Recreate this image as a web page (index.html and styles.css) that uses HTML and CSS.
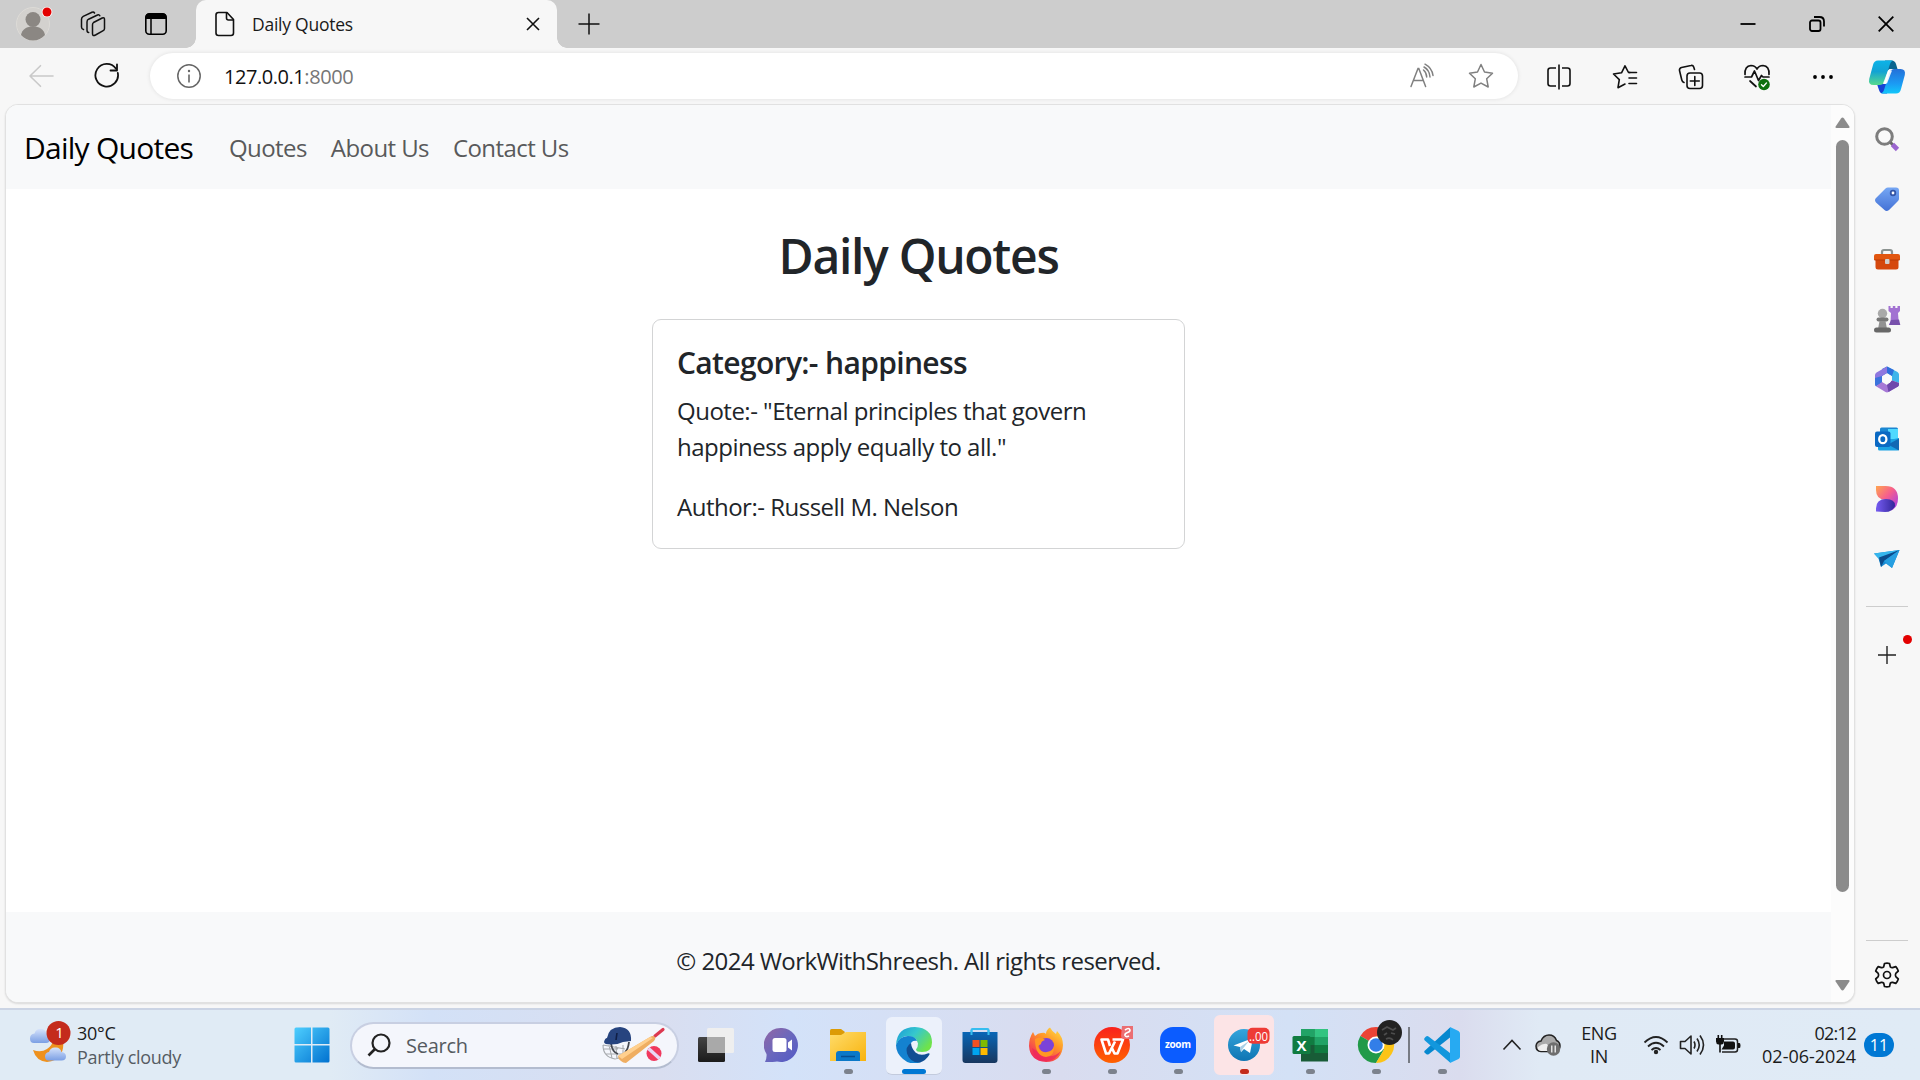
FILE: index.html
```html
<!DOCTYPE html>
<html lang="en">
<head>
<meta charset="utf-8">
<title>Daily Quotes</title>
<link rel="stylesheet" href="styles.css">
</head>
<body>
<div class="screen">
  <header class="tabstrip">
    <div class="strip-btn avatar-btn">
      <svg width="42" height="42" viewBox="0 0 42 42"><circle cx="21" cy="21" r="16.5" fill="#d3d1ce" stroke="#dddbd7"/><circle cx="21" cy="16.5" r="7.5" fill="#8b8783"/><path d="M9 32c1-6 6-8.500 12-8.500s11 2.500 12 8.500c-3 3.500-7 5.500-12 5.500s-9-2-12-5.500z" fill="#8b8783"/><circle cx="35" cy="9" r="5.300" fill="#fff"/><circle cx="35" cy="9" r="4.500" fill="#e30000"/></svg>
    </div>
    <div class="strip-btn workspaces-btn">
      <svg width="26" height="26" viewBox="0 0 26 26" fill="none" stroke="#111" stroke-width="1.500" stroke-linejoin="round" stroke-linecap="round"><path d="M13.500 11.500 22.200 7q2.300-1 2.300 1.500v9q0 1.500-1.300 2.200L15.500 24q-3 1.500-3-1.200v-9q0-1.600 1-2.300z"/><path d="M8.700 21.500Q7 21.500 7 19V11q0-2 1.600-2.800L17.500 4q1.700-.7 2.300.8"/><path d="M3.500 18.500Q1.500 18 1.500 16V8.300q0-2 1.700-2.900L12 1.300q1.700-.6 2.500.7"/></svg>
    </div>
    <div class="strip-btn actions-btn">
      <svg width="24" height="24" viewBox="0 0 24 24"><rect x="1.800" y="1.800" width="20.400" height="20.400" rx="3.500" fill="none" stroke="#000" stroke-width="1.600"/><path d="M1.500 7V5q0-3.500 3.500-3.500h14q3.500 0 3.500 3.500v2z"/><path d="M7 7v15" stroke="#000" stroke-width="1.500"/></svg>
    </div>
    <div class="tab">
      <svg class="tab-file" width="20" height="26" viewBox="0 0 20 26" fill="none" stroke="#111" stroke-width="1.600" stroke-linejoin="round"><path d="M3.500 1.500h8.500l6.500 7v13.500q0 2.500-2.500 2.500h-12.500q-2.500 0-2.500-2.500v-18q0-2.500 2.500-2.500z"/><path d="M11.500 1.500v5.500q0 2 2 2h5"/></svg>
      <span class="tab-title">Daily Quotes</span>
      <svg class="tab-close" width="16" height="16" viewBox="0 0 16 16" stroke="#111" stroke-width="1.600"><path d="M2 2l12 12M14 2 2 14"/></svg>
    </div>
    <div class="new-tab"><svg width="22" height="22" viewBox="0 0 22 22" stroke="#111" stroke-width="1.500"><path d="M11 .5v21M.5 11h21"/></svg></div>
    <div class="window-btns">
      <div class="win-btn"><svg width="16" height="16" viewBox="0 0 16 16" stroke="#000" stroke-width="1.800"><path d="M.5 8h15"/></svg></div>
      <div class="win-btn"><svg width="16" height="16" viewBox="0 0 16 16" fill="none" stroke="#000" stroke-width="1.800"><rect x="1" y="4.500" width="10.500" height="10.500" rx="2"/><path d="M5 1h5.500q4.500 0 4.500 4.500V10.500"/></svg></div>
      <div class="win-btn"><svg width="16" height="16" viewBox="0 0 16 16" stroke="#000" stroke-width="1.800"><path d="M.7.7l14.600 14.600M15.300.7.7 15.300"/></svg></div>
    </div>
  </header>

  <div class="toolbar">
    <div class="tool-left"><svg width="26" height="24" viewBox="0 0 26 24" fill="none" stroke="#c9c9c9" stroke-width="1.600" stroke-linecap="round" stroke-linejoin="round"><path d="M25 12H2M12.500 1.700 2 12l10.500 10.300"/></svg></div>
    <div class="tool-left"><svg width="26" height="26" viewBox="0 0 26 26" fill="none" stroke="#111" stroke-width="1.800" stroke-linecap="round" stroke-linejoin="round"><path d="M23.800 10A11.300 11.300 0 1 1 22 5.800"/><path d="M23 1.500v6h-6.500"/></svg></div>
    <div class="address">
      <svg class="info" width="26" height="26" viewBox="0 0 26 26"><circle cx="13" cy="13" r="11.200" fill="none" stroke="#666" stroke-width="1.500"/><path d="M13 11.500v8" stroke="#666" stroke-width="1.600"/><circle cx="13" cy="8" r="1.200" fill="#666"/></svg>
      <span class="url"><span class="host">127.0.0.1</span><span class="port">:8000</span></span>
      <svg class="read" width="26" height="26" viewBox="0 0 26 26" fill="none" stroke="#808080" stroke-width="1.500" stroke-linecap="round"><path d="M2 23.500 9 5.500h.8l6.800 18M4.500 17.500h9.700"/><path d="M14.500 7q3 2.500 3.200 7M15 4q5.500 3 6 10M16 1.200q7 3.800 8 11.300"/></svg>
      <svg class="star" width="26" height="26" viewBox="0 0 26 26" fill="none" stroke="#808080" stroke-width="1.500" stroke-linejoin="round"><path d="M13 1.500 16.500 9l8 1.200-5.800 5.600 1.500 8.200L13 20.100 5.800 24l1.500-8.200L1.500 10.200l8-1.200z"/></svg>
    </div>
    <div class="tools">
      <div class="tool"><svg width="26" height="26" viewBox="0 0 26 26" fill="none" stroke="#111" stroke-width="1.600" stroke-linejoin="round"><path d="M13 .5v25M10 4H4.500Q2 4 2 6.500v13Q2 22 4.500 22H10M16 4h5.500q2.500 0 2.500 2.500v13q0 2.500-2.500 2.500H16"/></svg></div>
      <div class="tool"><svg width="26" height="26" viewBox="0 0 26 26" fill="none" stroke="#111" stroke-width="1.600" stroke-linejoin="round" stroke-linecap="round"><path d="M18 8.500h-1.500L13 1.800 9.500 8.800 1.500 10l5.800 5.600L6 23.700l7-3.700"/><path d="M17 8.500h7.500M17 14h7.500M17 19.500h7.500"/></svg></div>
      <div class="tool"><svg width="26" height="26" viewBox="0 0 26 26" fill="none" stroke="#111" stroke-width="1.600" stroke-linejoin="round" stroke-linecap="round"><rect x="9" y="9" width="15.500" height="15.500" rx="3"/><path d="M16.800 12.500v9M12.300 17h9M16.500 5.500l-.8-2.500Q15 1 13 1.500L3.500 3.500q-2.300.7-2 3l2.300 9.500q.5 2 2.200 2.500"/></svg></div>
      <div class="tool"><svg width="28" height="28" viewBox="0 0 28 28" fill="none" stroke="#111" stroke-width="1.700" stroke-linejoin="round" stroke-linecap="round"><path d="M2 11.500Q1.500 3 8 2.500q4 0 6 3.500 2-3.500 6-3.500 6.500.5 6 9M2 14h6.500l3-6 4 9.500 3-5 1.500 1.500h6M7 18l6 5.500"/><circle cx="21" cy="21.500" r="5.800" fill="#0e700e" stroke="none"/><path d="m18.500 21.800 1.800 1.700 3.200-3.600" stroke="#fff" stroke-width="1.400"/></svg></div>
      <div class="tool"><svg width="22" height="6" viewBox="0 0 22 6"><circle cx="3" cy="3" r="1.900"/><circle cx="11" cy="3" r="1.900"/><circle cx="19" cy="3" r="1.900"/></svg></div>
    </div>
    <div class="copilot"><svg width="38" height="36" viewBox="0 0 38 36"><defs><linearGradient id="cp1" x1="0" y1="0" x2="0" y2="1"><stop offset="0" stop-color="#0cb3e8"/><stop offset=".45" stop-color="#12a3d4"/><stop offset="1" stop-color="#57da8d"/></linearGradient><linearGradient id="cp2" x1="0" y1="0" x2="0" y2="1"><stop offset="0" stop-color="#2470d8"/><stop offset=".6" stop-color="#1b9bf4"/><stop offset="1" stop-color="#12c7fa"/></linearGradient></defs><path d="M17 1.500h6.500q3.500 0 4.500 3.500l1.500 5h-8l-5 4z" fill="#09648f"/><path d="M9 25h13l-3 9.500h-4q-3 0-4-3.500z" fill="#1543d5"/><path d="M10 1.500h15q-2.500 1-3.500 5l-4.500 15q-1 4-5 4.500H5.500Q0 26 1.200 20L5 6q1-4.500 5-4.500z" fill="url(#cp1)"/><path d="M28 34.500H13q2.500-1 3.500-5l4.500-15q1-4 5-4.500h6.500Q38 10 36.800 16L33 30q-1 4.500-5 4.500z" fill="url(#cp2)"/><path d="M20 11.500h4l-5 13h-4z" fill="#fff" opacity=".9"/></svg></div>
  </div>

  <div class="workspace">
    <div class="viewport">
      <div class="page">
        <nav class="navbar">
          <span class="brand">Daily Quotes</span>
          <span class="nav-link">Quotes</span>
          <span class="nav-link">About Us</span>
          <span class="nav-link">Contact Us</span>
        </nav>
        <main class="content">
          <h1 class="heading">Daily Quotes</h1>
          <div class="card">
            <h2 class="card-title">Category:- happiness</h2>
            <p class="quote">Quote:- "Eternal principles that govern<br>happiness apply equally to all."</p>
            <p class="author">Author:- Russell M. Nelson</p>
          </div>
        </main>
        <footer class="footer">© 2024 WorkWithShreesh. All rights reserved.</footer>
      </div>
      <div class="scrollbar">
        <svg width="15" height="12" viewBox="0 0 15 12"><path d="M1.500 11Q0 11 .6 9.500L6 1.500q1.500-2 3 0l5.400 8Q15 11 13.500 11z" fill="#8b8b8b"/></svg>
        <div class="thumb"></div>
        <svg class="down" width="15" height="12" viewBox="0 0 15 12"><path d="M1.500 1Q0 1 .6 2.500L6 10.500q1.500 2 3 0l5.400-8Q15 1 13.500 1z" fill="#8b8b8b"/></svg>
      </div>
    </div>

    <aside class="sidebar">
      <div class="side-item"><svg width="28" height="28" viewBox="0 0 28 28"><circle cx="11.500" cy="11.500" r="7.800" fill="#fafafa" stroke="#7d7d7d" stroke-width="3"/><path d="m17.500 17.500 3 3" stroke="#686868" stroke-width="3"/><path d="m19.500 19.500 5 5" stroke="#9b65cf" stroke-width="4.600"/></svg></div>
      <div class="side-item"><svg width="26" height="26" viewBox="0 0 26 26"><defs><linearGradient id="tg" x2="0" y2="1"><stop stop-color="#76a7f4"/><stop offset="1" stop-color="#4472d6"/></linearGradient></defs><path d="M14 1.500h8q3 0 3 3v8q0 1.500-1 2.500l-9 9q-2.500 2-4.500 0L2 16.500q-2-2.500 0-4.500L11.500 2.500q1-1 2.500-1z" fill="url(#tg)"/><circle cx="19" cy="7" r="2.300" fill="#fff" stroke="#3355a8" stroke-width="1.800"/></svg></div>
      <div class="side-item"><svg width="28" height="24" viewBox="0 0 28 24"><path d="M9 8V5q0-2 2-2h6q2 0 2 2v3" fill="none" stroke="#8b9290" stroke-width="2.200"/><path d="M2.500 11h23v9q0 2.500-2.500 2.500H5Q2.500 22.500 2.500 20z" fill="#d5480d"/><path d="M3 7h22q2 0 2 2v4H1V9q0-2 2-2z" fill="#e2560f"/><path d="M1.500 13h25" stroke="#b83a08" stroke-width="1"/><rect x="12" y="12" width="4.500" height="5" rx="1" fill="#cfd0d0"/></svg></div>
      <div class="side-item"><svg width="28" height="28" viewBox="0 0 28 28"><path d="M15.500 1h2v2h2.300V1h2.500v2h2.200V1h2.500v5l-2 2 .7 9 1.300 3H16l1.500-3 .5-9-2.500-2z" fill="#a271d2"/><path d="m18 15 8-.5 1.300 5.500H16z" fill="#7851ac"/><circle cx="9.500" cy="8.500" r="4.700" fill="#a9a9a9"/><rect x="3.500" y="12.500" width="12" height="4" rx="2" fill="#777"/><path d="M6.500 16h6l1.500 8H5z" fill="#929292"/><rect x="1" y="22.500" width="17" height="5" rx="2.500" fill="#686868"/></svg></div>
      <div class="side-item"><svg width="26" height="28" viewBox="0 0 26 28"><path d="M13 1.500 23.500 7Q25 8 25 9.500V18l-7-2.500V11L11 6.500z" fill="#3fb4ea"/><path d="M13 1.500 20 5l-2 6-5-3-5 3V4z" fill="#2f6fdc"/><path d="M13 1.500 2.500 7.500Q1 8.500 1 10v9q0 1.500 1 2.300l6-4.300v-6l5-3z" fill="#8f78df"/><path d="M8 11v7l-6 3.300Q1 20.500 1 19v-6z" fill="#3b73dc"/><path d="M2 21.300 11.500 27q1.500.8 3 0l9.500-5.500q1-.7 1-2V18l-7-2.500-5 4.500-5-3z" fill="#a678d6"/><path d="M25 18v1.500q0 1.300-1 2L14.500 27l-1.500-7 5-4.500z" fill="#6f48ac"/><circle cx="13" cy="14" r="4.600" fill="#fafafa"/></svg></div>
      <div class="side-item"><svg width="26" height="26" viewBox="0 0 26 26"><rect x="6" y="1.500" width="18" height="14" rx="1.500" fill="#1b86d2"/><path d="M14 3h10v10l-4 3-6-2z" fill="#50d9ff"/><path d="M4 13h16l5-1v11q0 1.500-1.500 1.500H5.500Q4 24.500 4 23z" fill="#1ba2e3"/><path d="m25 12.500-11 6 11 6z" fill="#1269b4"/><rect x="1" y="5.500" width="15.500" height="15.500" rx="2" fill="#0a69c3"/><ellipse cx="8.800" cy="13.200" rx="3.600" ry="4" fill="none" stroke="#fff" stroke-width="2.300"/></svg></div>
      <div class="side-item"><svg width="24" height="28" viewBox="0 0 24 28"><defs><linearGradient id="ds" x2="1" y2="1"><stop stop-color="#ffa650"/><stop offset=".45" stop-color="#f65f8c"/><stop offset="1" stop-color="#9a38f5"/></linearGradient><linearGradient id="ds2" x2="1"><stop stop-color="#765cf2"/><stop offset="1" stop-color="#33269a"/></linearGradient></defs><path d="M1 1h9.500Q23 1 23 13.500q0 9-7 12L10 15Q1 14 1 5z" fill="url(#ds)"/><path d="M1 26.500v-3Q1 14 11 14q9 0 9 6.500 0 2-4 5-2 1.500-6 1.500z" fill="url(#ds2)"/></svg></div>
      <div class="side-item"><svg width="28" height="22" viewBox="0 0 28 22"><path d="M1 5.500 26.500 2 19 20l-6-4.500-5 3.500-2.500-8.500z" fill="#178bd4"/><path d="M1 5.500 26.500 2 6 11z" fill="#35b6ed"/><path d="M26.500 2 6 9.500 8 19l3-6z" fill="#0b4c8c"/><path d="M26.500 2 11 13l8 7z" fill="#269fe1"/></svg></div>
      <div class="side-rule"></div>
      <div class="side-add"><svg width="20" height="20" viewBox="0 0 20 20" stroke="#222" stroke-width="1.400"><path d="M10 1v18M1 10h18"/></svg><i class="dot"></i></div>
      <div class="side-bottom">
        <div class="side-rule"></div>
        <svg width="28" height="28" viewBox="0 0 28 28" fill="none" stroke="#111" stroke-width="1.700" stroke-linejoin="round"><path d="M11.500 2.500q2.500-.7 5 0l.8 3.300q1 1 2.300.8l3.200-1q1.800 2 2.500 4.400l-2.500 2.300q-.8 1.700 0 3.400l2.500 2.300q-.7 2.400-2.500 4.400l-3.200-1q-1.300-.2-2.300.8l-.8 3.300q-2.500.7-5 0l-.8-3.300q-1-1-2.300-.8l-3.200 1Q3.400 20.400 2.700 18l2.500-2.300q.8-1.700 0-3.400L2.700 10Q3.400 7.600 5.200 5.600l3.200 1q1.300.2 2.300-.8z"/><circle cx="14" cy="14" r="3.500"/></svg>
      </div>
    </aside>
  </div>

  <div class="taskbar">
    <div class="weather">
      <svg width="44" height="46" viewBox="0 0 44 46"><defs><linearGradient id="cl" x2="0" y2="1"><stop stop-color="#d5e2fb"/><stop offset="1" stop-color="#7b9fe4"/></linearGradient></defs><path d="M7 22q-4 0-4-4.500t4.500-5Q9 7.500 13.500 8q4.500-.5 6 4.500 3.500.5 3.500 5t-4 4.500z" fill="url(#cl)"/><path d="M6 29q8 3 14-1 6-4 6-10l10 2q1 8-2 13-5 7.500-14 8Q9 40 6 29z" fill="#ee911e"/><path d="M22 39.500q-4 0-4-4t4-4.500q1.500-5 6.500-4.500 4.500-.5 6 4.500 4.500.5 4.500 4.500t-4.500 4z" fill="url(#cl)"/><circle cx="31.500" cy="12" r="12" fill="#c42b1c"/><text class="badge-one" x="32.500" y="17" text-anchor="middle">1</text></svg>
      <div class="weather-text"><span>30°C</span><span class="muted">Partly cloudy</span></div>
    </div>
    <div class="start"><svg width="36" height="36" viewBox="0 0 36 36"><defs><linearGradient id="wn" gradientUnits="userSpaceOnUse" x1="0" y1="0" x2="36" y2="36"><stop stop-color="#4fd0ff"/><stop offset="1" stop-color="#0070cf"/></linearGradient></defs><g fill="url(#wn)"><path d="M2 .5h15v16.500H.5V2Q.5.500 2 .5zM18.500.5H34q1.500 0 1.500 1.500v15h-17zM.5 18.500H17v17H2Q.5 35.500.5 34zM18.500 18.500h17V34q0 1.500-1.500 1.500H18.500z"/></g></svg></div>
    <div class="search">
      <svg width="24" height="24" viewBox="0 0 24 24" fill="none" stroke="#222" stroke-width="2.200"><circle cx="14" cy="10" r="8.500"/><path d="M8 16l-6.500 6.500" stroke-width="2.600"/></svg>
      <span class="search-label">Search</span>
      <svg class="cricket" width="66" height="40" viewBox="0 0 66 40"><g fill="none" stroke="#a7aaae" stroke-width="1.100"><path d="M3 20q0 12 12 14l8-2M4 24h14M6 29h16M9 20l3 13M16 21l1 13M23 20v12M3 20l22 4"/></g><path d="M11 18q1 9 7 11M29 17q-1 8-4 10" fill="none" stroke="#44474f" stroke-width="1.800"/><path d="M4 17Q5 13 7 13 9 2 20 2q12 1 11 14l-8 1q-5 2.500-12 2.500-7 0-7-2.500z" fill="#27447f"/><path d="M17 8l-1 7" stroke="#111f45" stroke-width="1.600"/><path d="m55 11 8-6.500" stroke="#dc3850" stroke-width="3.200" stroke-linecap="round"/><path d="m18 31 32-19q3-2 5 0 1 2-1 4L26 38q-3 0-5-2-3-2-3-5z" fill="#efae62"/><path d="m18 31 32-19 3 1-31 21z" fill="#ffd08f"/><circle cx="54" cy="28.500" r="7.500" fill="#f0395e"/><path d="m48.500 23.500 11 10" stroke="#e9d6f5" stroke-width="3.500"/></svg>
    </div>
    <div class="apps">
      <div class="app"><svg width="36" height="36" viewBox="0 0 36 36"><defs><linearGradient id="tv" x2="0" y2="1"><stop stop-color="#444"/><stop offset="1" stop-color="#1b1b1b"/></linearGradient></defs><rect x="0" y="10" width="27" height="25" rx="1.500" fill="url(#tv)"/><rect x="9" y="1" width="27" height="25" rx="1.500" fill="#efefef"/><path d="M9 10h18v16H9z" fill="#a9a9a9"/></svg></div>
      <div class="app"><svg width="36" height="36" viewBox="0 0 36 36"><defs><linearGradient id="ch" x2="1" y2="1"><stop stop-color="#9366a4"/><stop offset=".5" stop-color="#6a68bd"/><stop offset="1" stop-color="#5158c6"/></linearGradient></defs><path d="M18 1a17 17 0 1 1-5 33.500q-3 .5-12 .5 2-4 1.500-8A17 17 0 0 1 18 1z" fill="url(#ch)"/><rect x="8.500" y="11" width="14" height="14" rx="2.500" fill="#fff"/><path d="m24 15.500 4-3v11l-4-3z" fill="#fff"/></svg></div>
      <div class="app run"><svg width="36" height="36" viewBox="0 0 36 36"><defs><linearGradient id="fo" x2="1" y2="1"><stop stop-color="#ffdc6b"/><stop offset="1" stop-color="#f8b30d"/></linearGradient></defs><path d="M0 3.500Q0 2 1.500 2H11l4 3-3 5H0z" fill="#dc9b06"/><path d="M0 8h11l5-3h20v29H0z" fill="url(#fo)"/><path d="M6 34V27q0-3 3-3h18q3 0 3 3v7z" fill="#0b78c8"/><path d="M11 29.500h14" stroke="#064e92" stroke-width="1.500"/></svg></div>
      <div class="app active"><svg width="36" height="36" viewBox="0 0 36 36"><defs><linearGradient id="e1" x2="1" y2=".6"><stop stop-color="#1998d8"/><stop offset=".5" stop-color="#36c8cd"/><stop offset="1" stop-color="#6fe34a"/></linearGradient></defs><path d="M0 18Q1 0 19 0q17 1 17 15.500 0 9.500-10 9.500-6 0-6-2.500 2-2 2-6Q21 9.500 12 9 4 9 0 18z" fill="url(#e1)"/><path d="M0 18Q3 9.500 12 9q7 0 9 5-6-1-7 5-1 10 11 16-10 4-18-3Q0 26 0 18z" fill="#1482d0"/><path d="M15 16q-6 4-4 10.500Q14 36 24 35.500q6-2 9.500-8 .5-2-2-1-7 3-12-1-4-4-4.500-9.500z" fill="#104e93"/></svg></div>
      <div class="app"><svg width="36" height="36" viewBox="0 0 36 36"><defs><linearGradient id="st" x2="0" y2="1"><stop stop-color="#0866b7"/><stop offset="1" stop-color="#18375f"/></linearGradient></defs><path d="M9.500 8V3q0-1 1-1h15q1 0 1 1v5" fill="none" stroke="#36bdf0" stroke-width="2"/><path d="M.5 5H35.500v28q0 3-3 3h-29q-3 0-3-3z" fill="url(#st)"/><path d="M9.500 3v5M26.500 3v5" stroke="#36bdf0" stroke-width="2"/><path d="M10.500 13h7v7h-7z" fill="#f25022"/><path d="M18.500 13h7v7h-7z" fill="#7fba00"/><path d="M10.500 21h7v7h-7z" fill="#00a4ef"/><path d="M18.500 21h7v7h-7z" fill="#ffb900"/></svg></div>
      <div class="app run"><svg width="36" height="36" viewBox="0 0 36 36"><defs><linearGradient id="ff" x1="1" x2=".3" y2="1"><stop stop-color="#ffe84b"/><stop offset=".45" stop-color="#ff9626"/><stop offset="1" stop-color="#f0265f"/></linearGradient></defs><path d="M5 5l2 4q3-3 6-3 4-1 5 1 0-4 4-6.500 2 4 6 6.500l1-3q6 6 6 14Q34 35 18 35 2 34 1 19q0-8 4-14z" fill="url(#ff)"/><path d="M4 21q2 13 14 13 10 0 15-10-8 8-18 4z" fill="#ee255e" opacity=".75"/><circle cx="18.500" cy="18.500" r="7.500" fill="#7b43d8"/><path d="M7 12q6-3 10 1-4 1-4 4l-3 2q2 7 9 6 6-1 7-6 1 10-8 11Q7 29 7 12z" fill="#ff9723"/></svg></div>
      <div class="app run"><svg class="spill" width="36" height="36" viewBox="0 0 36 36"><defs><linearGradient id="wp" x2="0" y2="1"><stop stop-color="#f9221d"/><stop offset="1" stop-color="#ff6200"/></linearGradient></defs><circle cx="18" cy="18" r="18" fill="url(#wp)"/><path d="M16 19 14 12.500H7.500L12 26.500l3 0 6-12 M18.500 12.500H29L23.500 26.500h-3L17.500 20" fill="none" stroke="#fff" stroke-width="2.600" stroke-linejoin="round"/><path d="M28-1h11v13H29q-2-1-2-3z" fill="#eb6e72"/><path d="M31 3q4-3 5 0 0 2-2.500 2.500-3 1-2.500 3 1 2 4 .5" fill="none" stroke="#fff" stroke-width="1.600"/></svg></div>
      <div class="app run"><svg width="36" height="36" viewBox="0 0 36 36"><rect width="36" height="36" rx="13" fill="#0b5cff"/><text class="zoom" x="18" y="21" text-anchor="middle" textLength="26">zoom</text></svg></div>
      <div class="app run alert"><svg class="spill" width="36" height="36" viewBox="0 0 36 36"><defs><linearGradient id="te" x2="0" y2="1"><stop stop-color="#35a5dc"/><stop offset="1" stop-color="#0e75b3"/></linearGradient></defs><circle cx="18" cy="18" r="16" fill="url(#te)"/><path d="M7.500 18.500 27 11l-3 15-6-4-3 3-1-5z" fill="#fff"/><path d="m14 20 9-6-6 7.500-2 3.500z" fill="#a9cfe6"/><rect x="21.500" y=".7" width="22" height="16" rx="5" fill="#ee3b36"/><text class="tg-badge" x="32.500" y="13.500" text-anchor="middle" textLength="19" lengthAdjust="spacingAndGlyphs">..00</text></svg></div>
      <div class="app run"><svg width="36" height="36" viewBox="0 0 36 36"><path d="M9 2h27v32.500H9z" fill="#185c37"/><path d="M9 2h13.500v8H9z" fill="#21a366"/><path d="M22.500 2h13.500v8H22.500z" fill="#33c481"/><path d="M9 10h13.500v8H9zM22.500 18H36v8H22.500z" fill="#107c41"/><path d="M22.500 10H36v8H22.500z" fill="#21a366"/><rect x=".5" y="9" width="18" height="18" rx="1.500" fill="#107c41"/><text class="xl" x="9.500" y="23.500" text-anchor="middle">X</text></svg></div>
      <div class="app run"><svg class="spill" width="36" height="36" viewBox="0 0 36 36"><path d="M18 18 2.400 9A18 18 0 0 1 33.600 9z" fill="#ea4335"/><path d="M18 18 2.400 9A18 18 0 0 0 18 36l8-13.500z" fill="#219a49"/><path d="M18 9h15.600A18 18 0 0 1 18 36l8-13.500z" fill="#fcc417"/><circle cx="18" cy="18" r="8.500" fill="#fff"/><circle cx="18" cy="18" r="6.800" fill="#327ee8"/><circle cx="31.500" cy="5.500" r="12.500" fill="#222"/><path d="m24 3 5-3 6 3 3-2M26 8l3-2M33 6l4 1M28 12q4-2 7 1" fill="none" stroke="#4d4d4d" stroke-width="1.700"/></svg></div>
      <div class="app run vs"><svg width="36" height="36" viewBox="0 0 36 36"><path d="M26 .5 1 23.500q-1.500 1.200 0 2.500L2.500 27.200q1 .8 2.500-.2L26 10.500z" fill="#0688cf"/><path d="M4.500 9.500q-1.200-.8-2.500 0L.8 10.700Q-.5 12 .8 13.500L26 35.500V26z" fill="#1297dd"/><path d="m26 0 8.500 4Q36 5 36 6.500v23q0 1.500-1.500 2.500L26 36z" fill="#27aaf2"/></svg></div>
    </div>
    <div class="tray">
      <svg class="t-chev" width="20" height="12" viewBox="0 0 20 12" fill="none" stroke="#222" stroke-width="1.600"><path d="m1.500 10.500 8.500-9 8.500 9"/></svg>
      <svg class="t-cloud" width="26" height="24" viewBox="0 0 26 24"><path d="M6 18.500q-5-.5-5-5.500Q1.500 8.500 6 8 8.500 2 14 2q5.500 0 7.500 5.500Q25 9 25 13t-4 5.500z" fill="#aaa" stroke="#222" stroke-width="1.500"/><path d="M6 18q-4-.5-3-4 5-4 9-3l4 7z" fill="#eee"/><circle cx="18.500" cy="16" r="6.700" fill="#6e6e6e"/><path d="M16.800 12.500v7M20.200 12.500v7" stroke="#fff" stroke-width="1.200"/></svg>
      <div class="lang"><span>ENG</span><span>IN</span></div>
      <svg class="t-wifi" width="26" height="20" viewBox="0 0 26 20" fill="none" stroke="#222" stroke-width="1.800"><path d="M1.500 7.500q11.500-11 23 0M5 11.500q8-7.500 16 0M8.500 15q4.500-4 9 0"/><circle cx="13" cy="17" r="2.200" fill="#222" stroke="none"/></svg>
      <svg class="t-vol" width="26" height="22" viewBox="0 0 26 22" fill="none" stroke="#222" stroke-width="1.600" stroke-linejoin="round"><path d="M1.500 7.500H6L12 2v18l-6-5.500H1.500z"/><path d="M15 7.500q2 3.500 0 7M18 4.500q4.500 6.500 0 13M21 1.500q7 9.500 0 19"/></svg>
      <svg class="t-bat" width="26" height="22" viewBox="0 0 26 22"><path d="M9 5h11q2.500 0 2.500 2.500v8q0 2.500-2.500 2.500H7" fill="none" stroke="#222" stroke-width="1.500"/><path d="M9 7.500h9q2 0 2 2v4q0 2-2 2H6.500l2.500-4zM23 9h1.500q1 0 1 2.500t-1 2.500H23zM1 4h8v3.500q0 2.500-2.500 3h-3Q1 10 1 7.500z" fill="#111"/><path d="M3.300 1v4M6.700 1v4M5 9v9.500" stroke="#111" stroke-width="1.600"/></svg>
      <div class="clock"><span class="time">02:12</span><span>02-06-2024</span></div>
      <div class="count">11</div>
    </div>
  </div>
</div>
</body>
</html>
```
FILE: styles.css
```css
* { box-sizing: border-box; }
body { margin: 0; font-family: "Open Sans", "Noto Sans", sans-serif; color: #212529; overflow: hidden; }
svg { display: block; flex: none; }
h1, h2, p { margin: 0; }

.screen { width: 1920px; height: 1080px; display: flex; flex-direction: column; background: #f7f7f7; }

/* Browser tab strip */
.tabstrip { height: 48px; display: flex; align-items: center; background: #cdcdcd; }
.strip-btn { display: flex; justify-content: center; }
.avatar-btn { width: 66px; }
.workspaces-btn { width: 54px; }
.actions-btn { width: 76px; padding-right: 4px; }
.tab { position: relative; width: 361px; height: 48px; display: flex; align-items: center; padding: 0 16px 0 19px; background: #f7f7f7; border-radius: 10px 10px 0 0; }
.tab::before, .tab::after { content: ""; position: absolute; bottom: 0; width: 10px; height: 10px; }
.tab::before { left: -10px; background: radial-gradient(circle at 0 0, transparent 9.5px, #f7f7f7 10px); }
.tab::after { right: -10px; background: radial-gradient(circle at 100% 0, transparent 9.5px, #f7f7f7 10px); }
.tab-title { margin-left: 17px; font-size: 17.5px; letter-spacing: -.25px; color: #1a1a1a; white-space: nowrap; }
.tab-close { margin-left: auto; }
.new-tab { width: 63px; display: flex; justify-content: center; }
.window-btns { margin-left: auto; display: flex; }
.win-btn { width: 69px; display: flex; justify-content: center; }

/* Address bar row */
.toolbar { height: 56px; display: flex; align-items: center; padding-left: 8px; }
.tool-left { width: 66px; display: flex; justify-content: center; }
.address { width: 1368px; height: 46px; margin-left: 10px; display: flex; align-items: center; padding: 0 24px 0 26px; background: #fff; border-radius: 23px; box-shadow: 0 0 4px rgba(0, 0, 0, .1); }
.url { margin-left: 22px; font-size: 20px; color: #111; white-space: nowrap; }
.host { letter-spacing: -.45px; }
.port { letter-spacing: -.4px; color: #767676; }
.read { margin-left: auto; }
.star { margin-left: 33px; }
.tools { display: flex; align-items: center; margin: 2px 0 0 8px; }
.tool { width: 66px; display: flex; justify-content: center; }
.copilot { width: 62px; margin-top: 2px; display: flex; justify-content: center; }

/* Page area */
.workspace { height: 904px; display: flex; }
.viewport { width: 1850px; height: 899px; margin-left: 5px; display: flex; background: #fff; border: 1px solid #e1e1e1; border-radius: 13px; overflow: hidden; box-shadow: 0 1px 2px rgba(0, 0, 0, .12); }
.page { width: 1825px; display: flex; flex-direction: column; }
.navbar { height: 84px; display: flex; align-items: center; padding-left: 18px; background: #f8f9fa; white-space: nowrap; }
.brand { font-size: 30px; letter-spacing: -.75px; color: #000; margin-right: 24px; }
.nav-link { font-size: 24px; letter-spacing: -.58px; color: #595a5b; padding: 0 12px; }
.content { flex: 1; display: flex; flex-direction: column; align-items: center; }
.heading { margin-top: 38px; font-size: 48px; line-height: 58px; font-weight: 600; letter-spacing: -1.3px; }
.card { width: 533px; height: 230px; margin-top: 34px; padding: 25px 24px; border: 1px solid #d3d4d5; border-radius: 9px; white-space: nowrap; }
.card-title { font-size: 30px; line-height: 36px; font-weight: 600; letter-spacing: -.65px; margin-bottom: 12px; }
.quote, .author { font-size: 24px; line-height: 36px; letter-spacing: -.5px; }
.quote { margin-bottom: 24px; }
.footer { height: 90px; display: flex; justify-content: center; padding-top: 31px; font-size: 24px; line-height: 36px; letter-spacing: -.56px; background: #f8f9fa; white-space: nowrap; }
.scrollbar { flex: 1; display: flex; flex-direction: column; align-items: center; background: #fcfcfc; padding: 12px 1px 11px 0; }
.thumb { width: 13px; height: 752px; margin-top: 11px; background: #8b8b8b; border-radius: 7px; }
.down { margin-top: auto; }

.sidebar { flex: 1; display: flex; flex-direction: column; align-items: center; padding: 5px 2px 0 0; }
.side-item { height: 60px; display: flex; align-items: center; }
.side-rule { width: 42px; height: 1px; background: #cdcdcd; }
.side-item + .side-rule { margin-top: 17px; }
.side-add { position: relative; margin-top: 38px; }
.dot { position: absolute; left: 26px; top: -10px; width: 9px; height: 9px; border-radius: 50%; background: #e30000; }
.side-bottom { margin-top: auto; display: flex; flex-direction: column; align-items: center; gap: 20px; padding-bottom: 19px; }

/* Taskbar */
.taskbar { height: 72px; display: flex; align-items: center; border-top: 2px solid #cbd4e4; background: linear-gradient(90deg, #e0ebf5 0, #e0ebf5 330px, #d3e1f7 430px, #d9def0 660px, #d3e2f9 790px, #d9dcef 1060px, #d3e1f6 1290px, #dadcee 1460px, #e0eaf5 1540px, #e0ebf6 1920px); }
.weather { width: 294px; display: flex; align-items: center; padding-left: 27px; }
.weather svg { margin-bottom: 3px; }
.weather-text { display: flex; flex-direction: column; align-items: flex-start; margin-left: 6px; font-size: 18px; line-height: 24px; letter-spacing: -.3px; color: #1b1b1b; white-space: nowrap; }
.muted { color: #555c63; }
.badge-one { font-size: 15px; fill: #fff; }
.start { width: 56px; }
.search { width: 329px; height: 47px; display: flex; align-items: center; padding: 0 11px 0 15px; background: #f4f6fc; border: 2px solid #c8cfe2; border-bottom-color: #b3bccf; border-radius: 24px; }
.search-label { margin-left: 15px; font-size: 20px; letter-spacing: -.25px; color: #555a60; }
.cricket { margin-left: auto; }
.apps { display: flex; margin-left: 4px; }
.app { position: relative; width: 66px; height: 60px; display: flex; align-items: center; justify-content: center; }
.app svg { position: relative; }
.spill { overflow: visible; }
.run::after, .active::after { content: ""; position: absolute; bottom: 1px; width: 9px; height: 5px; border-radius: 3px; background: #7c828d; }
.active::before, .alert::before { content: ""; position: absolute; border-radius: 6px; }
.active::before { left: 5px; top: 2px; width: 56px; height: 57px; background: #ecf1fb; border-bottom: 1px solid #c3cbdd; }
.alert::before { left: 3px; top: 0; width: 60px; height: 60px; background: #fce4e6; }
.active::after { width: 24px; background: #0078d4; }
.alert::after { background: #c42b1c; }
.vs::before { content: ""; position: absolute; left: -1px; top: 12px; width: 2px; height: 36px; background: #777b84; }
.zoom { font-size: 10px; font-weight: 700; fill: #fff; }
.tg-badge { font-size: 13px; fill: #fff; }
.xl { font-size: 15px; font-weight: 700; fill: #fff; }
.tray { display: flex; align-items: center; margin-left: 27px; color: #1b1b1b; font-size: 18px; line-height: 23px; white-space: nowrap; }
.t-cloud { margin-left: 13px; }
.lang { width: 52px; margin-left: 12px; display: flex; flex-direction: column; align-items: center; letter-spacing: -.3px; }
.t-wifi { margin-left: 18px; }
.t-vol { margin-left: 10px; }
.t-bat { margin-left: 10px; }
.clock { width: 115px; display: flex; flex-direction: column; align-items: flex-end; }
.time { letter-spacing: -.9px; }
.count { width: 30px; height: 24px; margin-left: 8px; border-radius: 12px; background: #0078d4; color: #fff; font-size: 16px; line-height: 24px; text-align: center; }
```
